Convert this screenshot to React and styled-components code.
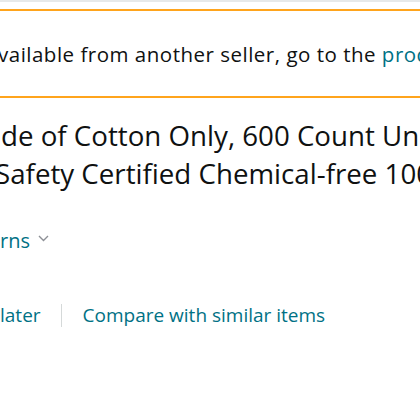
import React from "react";
import styled, { createGlobalStyle } from "styled-components";

const GlobalStyle = createGlobalStyle`
  html, body {
    margin: 0;
    padding: 0;
    background: #ffffff;
    overflow: hidden;
  }
  body {
    font-family: "Open Sans", "Noto Sans", Arial, sans-serif;
    color: #0f1111;
  }
`;

const Page = styled.div`
  width: 420px;
  height: 420px;
  overflow: hidden;
  display: flex;
  flex-direction: column;
`;

const TopRule = styled.div`
  height: 2px;
  background: #e7e9e9;
  margin-bottom: 7px;
`;

const Alert = styled.div`
  margin: 0 -12px;
  height: 85px;
  border: 2px solid #ffa41c;
  border-radius: 4px;
  display: flex;
  align-items: center;
  padding: 0 10px 0 8px;
`;

const AlertText = styled.p`
  margin: 0;
  font-size: 20.5px;
  letter-spacing: 0.5px;
  line-height: 24px;
  white-space: nowrap;
  color: #0f1111;
`;

const Link = styled.a`
  color: #007185;
  text-decoration: none;
  cursor: pointer;
`;

const Title = styled.h2`
  margin: 18px 0 0 -5px;
  font-size: 27.7px;
  font-weight: 400;
  line-height: 38px;
  white-space: nowrap;
  text-indent: 6px;
  color: #0f1111;
`;

const Returns = styled.div`
  margin-top: 37px;
  display: flex;
  align-items: center;
  gap: 8px;
  font-size: 20px;
  line-height: 24px;
`;

const Chevron = styled.svg`
  width: 11px;
  height: 7px;
  margin-top: -6px;
`;

const Actions = styled.div`
  margin-top: 50px;
  display: flex;
  align-items: center;
  font-size: 19px;
  line-height: 24px;
`;

const Separator = styled.span`
  width: 1px;
  height: 23px;
  background: #d5d9d9;
  margin: 0 21px 0 20px;
`;

export default function App() {
  return (
    <>
      <GlobalStyle />
      <Page>
        <TopRule />
        <Alert>
          <AlertText>
            vailable from another seller, go to the <Link>product detail page</Link>.
          </AlertText>
        </Alert>
        <Title>
          de of Cotton Only, 600 Count Unbleached
          <br />
          Safety Certified Chemical-free 100% Cotton
        </Title>
        <Returns>
          <Link>rns</Link>
          <Chevron viewBox="0 0 11 7" aria-hidden="true">
            <path d="M1 1l4.5 4.5L10 1" fill="none" stroke="#8d9096" strokeWidth="1.4" />
          </Chevron>
        </Returns>
        <Actions>
          <Link>later</Link>
          <Separator />
          <Link>Compare with similar items</Link>
        </Actions>
      </Page>
    </>
  );
}
